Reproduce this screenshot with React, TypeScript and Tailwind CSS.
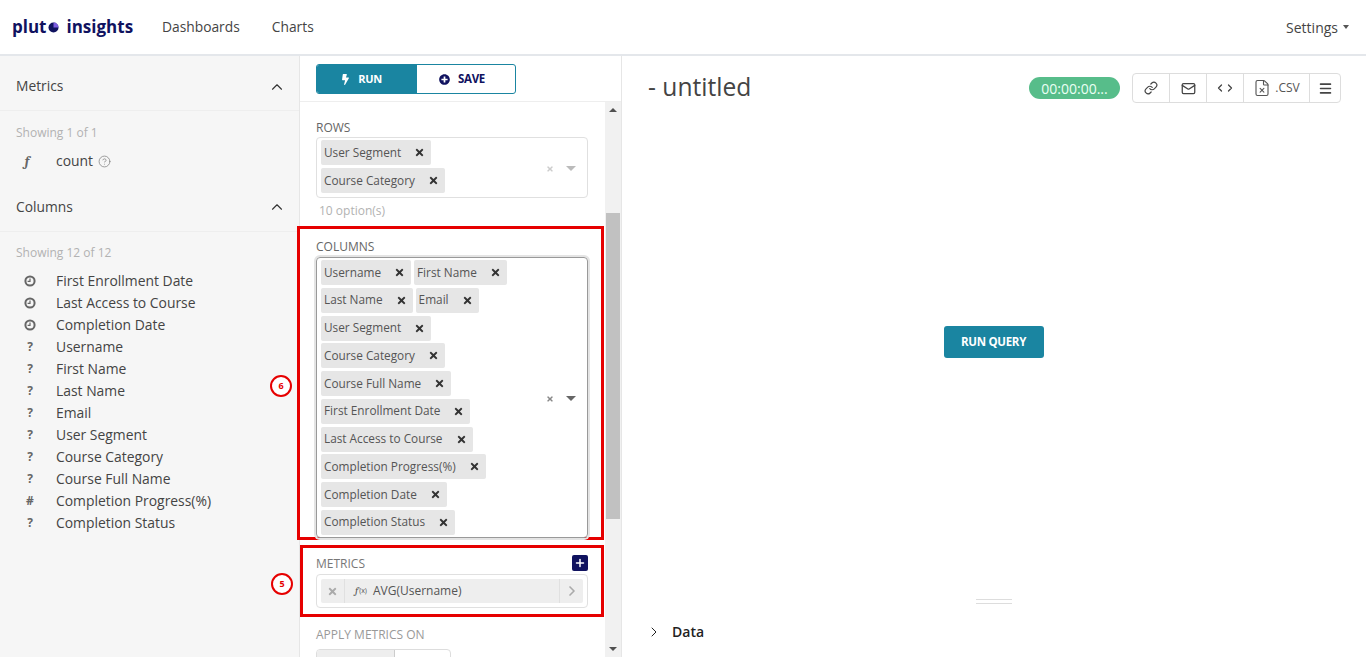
import React from 'react'
import { ChevronUp, ChevronRight, CircleHelp, Link, Mail, ChevronLeft, FileX, Menu, Plus } from 'lucide-react'
import { FaBolt, FaPlusCircle, FaTimes } from 'react-icons/fa'

const font = { fontFamily: '"Open Sans", sans-serif' }

const Clock = () => (
  <svg width="12" height="12" viewBox="0 0 12 12" fill="none">
    <circle cx="6" cy="6" r="4.6" stroke="#666" strokeWidth="2" />
    <path d="M6 3.4V6.4H3.6" stroke="#666" strokeWidth="1.2" />
  </svg>
)

const Caret = ({ className }: { className: string }) => (
  <span className={`w-0 h-0 border-x-[5px] border-x-transparent border-t-[5px] ${className}`} />
)

const Chip = ({ label }: { label: string }) => (
  <div className="flex items-center h-[25px] bg-[#e6e6e6] rounded-[2px] pl-[3px] pr-[6px] text-[11.8px] text-[#555]">
    <span>{label}</span>
    <FaTimes className="ml-[13px] text-[11px] text-[#333]" />
  </div>
)

const SideHeader = ({ title, height }: { title: string; height: string }) => (
  <div className={`flex items-center justify-between pl-4 pr-[13px] border-b border-[#eeeeee] ${height}`}>
    <span className="text-[13.8px] text-[#444]">{title}</span>
    <ChevronUp size={18} strokeWidth={1.5} className="text-[#333]" />
  </div>
)

const columns: [string, string][] = [
  ['clock', 'First Enrollment Date'],
  ['clock', 'Last Access to Course'],
  ['clock', 'Completion Date'],
  ['?', 'Username'],
  ['?', 'First Name'],
  ['?', 'Last Name'],
  ['?', 'Email'],
  ['?', 'User Segment'],
  ['?', 'Course Category'],
  ['?', 'Course Full Name'],
  ['#', 'Completion Progress(%)'],
  ['?', 'Completion Status'],
]

const colChips = [
  ['Username', 'First Name'],
  ['Last Name', 'Email'],
  ['User Segment'],
  ['Course Category'],
  ['Course Full Name'],
  ['First Enrollment Date'],
  ['Last Access to Course'],
  ['Completion Progress(%)'],
  ['Completion Date'],
  ['Completion Status'],
]

const Badge = ({ n, left }: { n: number; left: string }) => (
  <div className={`absolute ${left} top-1/2 mt-[3px] -translate-y-1/2 w-[22px] h-[22px] rounded-full border-2 border-[#e60000] bg-white flex items-center justify-center text-[9px] font-bold text-[#e60000]`}>
    {n}
  </div>
)

const App = () => {
  return (
    <div style={font} className="w-[1366px] h-[657px] overflow-hidden bg-white flex flex-col text-[#444]">
      <header className="h-[56px] shrink-0 flex items-center border-b-2 border-[#e4e7eb] pl-3 pr-[17px]">
        <div className="flex items-center w-[150px] text-[17px] font-bold text-[#10125f] leading-none pb-[2px]">
          <span>plut</span>
          <svg width="11" height="11" viewBox="0 0 11 11" className="mt-[2px] ml-[1px]">
            <circle cx="5.5" cy="5.5" r="5" fill="#10125f" />
            <path d="M5.5 5.5V0.5A5 5 0 0 1 10.5 5.5Z" fill="#7c5ce0" />
          </svg>
          <span className="ml-[8px]">insights</span>
        </div>
        <nav className="flex gap-8 text-[13.8px] text-[#444]">
          <span>Dashboards</span>
          <span>Charts</span>
        </nav>
        <div className="ml-auto flex items-center gap-[5px] text-[14px]">
          <span>Settings</span>
          <span className="w-0 h-0 border-x-[3px] border-x-transparent border-t-[4px] border-t-[#555]" />
        </div>
      </header>

      <div className="flex flex-1 min-h-0">
        <aside className="w-[300px] shrink-0 bg-[#f6f6f6] border-r border-[#e6e6e6] text-[13.9px]">
          <SideHeader title="Metrics" height="h-[55px] pt-[7px]" />
          <div className="pl-4 pt-[14px] text-[12px] text-[#b2b2b2] leading-[16px]">Showing 1 of 1</div>
          <div className="flex items-center h-[22px] mt-[9px]">
            <span className="w-[56px] text-center italic font-bold font-serif text-[#666] pr-[2px]">f</span>
            <span>count</span>
            <CircleHelp size={13} strokeWidth={1.5} className="ml-[5px] text-[#888]" />
          </div>
          <SideHeader title="Columns" height="h-[60px] pt-[11px]" />
          <div className="pl-4 pt-[13px] text-[12px] text-[#b2b2b2] leading-[16px]">Showing 12 of 12</div>
          <div className="mt-[9px]">
            {columns.map(([type, name]) => (
              <div key={name} className="flex items-center h-[22px]">
                <span className="w-[60px] flex justify-center text-[12px] font-bold text-[#666]">
                  {type === 'clock' ? <Clock /> : type}
                </span>
                <span className="-ml-[4px]">{name}</span>
              </div>
            ))}
          </div>
        </aside>

        <section className="w-[322px] shrink-0 border-r border-[#e6e6e6] flex flex-col min-h-0">
          <div className="h-[46px] shrink-0 border-b border-[#eeeeee] pl-4 pt-[8px]">
            <div className="flex w-[200px] h-[30px] rounded-[3px] border border-[#1a85a1] overflow-hidden text-[11.5px] font-bold tracking-tight">
              <div className="w-[100px] bg-[#1a85a1] text-white flex items-center justify-center gap-[7px] pr-[12px] text-[11px]">
                <FaBolt className="text-[11px]" />
                RUN
              </div>
              <div className="flex-1 flex items-center justify-center gap-[8px] pr-[8px] text-[#10125f]">
                <FaPlusCircle className="text-[11px]" />
                SAVE
              </div>
            </div>
          </div>

          <div className="flex flex-1 min-h-0">
            <div className="w-[305px] shrink-0">
              <div className="pl-4 pr-[17px] pt-[18px]">
                <div className="text-[12px] leading-[16px] text-[#666]">ROWS</div>
                <div className="mt-[1px] h-[61px] border border-[#e0e0e0] rounded-[4px] pl-[4px] pt-[2px] pr-[11px] flex items-center">
                  <div className="flex-1 self-start flex flex-col items-start gap-[3px]">
                    <Chip label="User Segment" />
                    <Chip label="Course Category" />
                  </div>
                  <FaTimes className="text-[8px] text-[#ccc] mr-[12px]" />
                  <Caret className="border-t-[#bbb]" />
                </div>
                <div className="mt-[5px] pl-[3px] text-[12px] leading-[16px] text-[#b2b2b2]">10 option(s)</div>
              </div>

              <div className="relative mt-[7px] -ml-[3px] mr-[1px] h-[314px] border-[3px] border-[#e60000] pl-[16px] pr-[13px] pt-[10px]">
                <Badge n={6} left="left-[-30px]" />
                <div className="text-[12px] leading-[16px] text-[#666]">COLUMNS</div>
                <div className="mt-[2px] h-[281px] border border-[#999] rounded-[4px] shadow-[0_0_0_2px_#e4e4e4] pl-[4px] pt-[2px] pr-[11px] flex items-center">
                  <div className="flex-1 self-start flex flex-col gap-[2.75px]">
                    {colChips.map((row) => (
                      <div key={row[0]} className="flex gap-[3px]">
                        {row.map((c) => (
                          <Chip key={c} label={c} />
                        ))}
                      </div>
                    ))}
                  </div>
                  <FaTimes className="text-[8px] text-[#888] mr-[12px]" />
                  <Caret className="border-t-[#666]" />
                </div>
              </div>

              <div className="relative mt-[5px] mr-[1px] h-[72px] border-[3px] border-[#e60000] pl-[13px] pr-[13px] pt-[7px]">
                <Badge n={5} left="left-[-32px]" />
                <div className="flex items-center justify-between h-[16px]">
                  <span className="text-[12px] text-[#777] mt-[2px]">METRICS</span>
                  <span className="w-[16px] h-[16px] bg-[#10125f] rounded-[2px] flex items-center justify-center">
                    <Plus size={12} strokeWidth={3} className="text-white" />
                  </span>
                </div>
                <div className="mt-[3px] h-[34px] border border-[#e0e0e0] rounded-[4px] p-[4px]">
                  <div className="h-full flex items-center bg-[#eeeeee] rounded-[2px] text-[12px] text-[#555]">
                    <div className="w-[24px] h-full flex items-center justify-center border-r border-[#e0e0e0]">
                      <FaTimes className="text-[11px] text-[#aaa]" />
                    </div>
                    <span className="ml-[10px] italic font-serif text-[11px]">f</span>
                    <span className="text-[7px] mr-[5px] ml-[1px]">(x)</span>
                    <span className="ml-[1px]">AVG(Username)</span>
                    <div className="ml-auto w-[24px] h-full flex items-center justify-center border-l border-[#e0e0e0]">
                      <ChevronRight size={16} strokeWidth={2.5} className="text-[#aaa]" />
                    </div>
                  </div>
                </div>
              </div>

              <div className="px-4 pt-[10px]">
                <div className="text-[12px] leading-[16px] text-[#999]">APPLY METRICS ON</div>
                <div className="mt-[6px] flex w-[135px] h-[24px] border border-[#ddd] rounded-[4px] overflow-hidden">
                  <div className="w-[78px] bg-[#eeeeee] border-r border-[#ccc]" />
                </div>
              </div>
            </div>

            <div className="w-[16px] shrink-0 bg-[#f1f1f1] flex flex-col items-center">
              <div className="h-[16px] flex items-center">
                <span className="w-0 h-0 border-x-[4px] border-x-transparent border-b-[4px] border-b-[#505050]" />
              </div>
              <div className="mt-[95px] w-[14px] h-[306px] bg-[#c1c1c1]" />
              <div className="mt-auto h-[16px] flex items-center">
                <span className="w-0 h-0 border-x-[4px] border-x-transparent border-t-[4px] border-t-[#505050]" />
              </div>
            </div>
          </div>
        </section>

        <main className="flex-1 flex flex-col min-w-0 pl-[26px] pr-[25px]">
          <div className="flex items-center pt-[17px]">
            <h1 className="text-[24.6px] leading-[32px] text-[#444] -mt-[2px]">- untitled</h1>
            <div className="ml-auto w-[91px] h-[22px] rounded-full bg-[#57bd8a] text-[#eafff4] text-[14px] flex items-center justify-center">
              00:00:00...
            </div>
            <div className="ml-[12px] flex h-[30px] border border-[#dddddd] rounded-[4px] text-[#444]">
              <div className="w-[37px] flex items-center justify-center border-r border-[#dddddd]">
                <Link size={14} />
              </div>
              <div className="w-[37px] flex items-center justify-center border-r border-[#dddddd]">
                <Mail size={15} />
              </div>
              <div className="w-[37px] flex items-center justify-center border-r border-[#dddddd]">
                <ChevronLeft size={12} strokeWidth={2.5} />
                <ChevronRight size={12} strokeWidth={2.5} className="-ml-[2px]" />
              </div>
              <div className="w-[66px] flex items-center justify-center gap-[4px] border-r border-[#dddddd] text-[12px] text-[#555]">
                <FileX size={18} strokeWidth={1.5} />
                .CSV
              </div>
              <div className="flex-1 w-[30px] flex items-center justify-center">
                <Menu size={15} strokeWidth={2.5} />
              </div>
            </div>
          </div>

          <div className="flex-1 flex items-center justify-center pb-[16px] -mt-[2px]">
            <div className="w-[100px] h-[32px] -ml-[2px] rounded-[3px] bg-[#1a85a1] text-white text-[11.5px] font-bold tracking-tight flex items-center justify-center">
              RUN QUERY
            </div>
          </div>

          <div className="flex flex-col items-center gap-[3px] -translate-x-[1px]">
            <span className="w-[36px] h-px bg-[#dddddd]" />
            <span className="w-[36px] h-px bg-[#dddddd]" />
          </div>
          <div className="h-[53px] flex items-start pt-[17px] text-[14px] font-semibold text-[#222]">
            <ChevronRight size={16} strokeWidth={1.5} className="mt-[3px] -ml-[2px]" />
            <span className="ml-[10px]">Data</span>
          </div>
        </main>
      </div>
    </div>
  )
}

export default App
